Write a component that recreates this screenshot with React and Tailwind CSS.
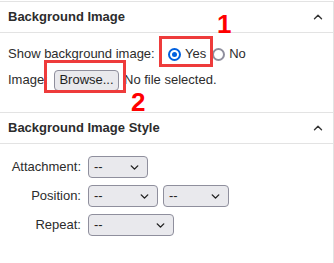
import { ChevronUp, ChevronDown } from 'lucide-react'

function Select({ width }) {
  return (
    <div
      className={`flex h-[22px] items-center justify-between rounded-[4px] border border-[#8f8f9d] bg-[#e9e9ed] pl-[5px] pr-[6px] text-[13px] text-[#1f1f1f] ${width}`}
    >
      <span>--</span>
      <ChevronDown size={13} strokeWidth={2.6} className="text-[#1f1f1f]" />
    </div>
  )
}

function Header({ title }) {
  return (
    <div className="flex h-[31px] items-center justify-between border-b border-[#e3e3e3] pl-2 pr-[8px]">
      <span className="text-[13px] font-bold text-[#2c2c2c]">{title}</span>
      <ChevronUp size={14} strokeWidth={2.4} className="text-[#333]" />
    </div>
  )
}

function Row({ label, children }) {
  return (
    <div className="flex items-center gap-[7px]">
      <span className="w-[81px] text-right">{label}</span>
      {children}
    </div>
  )
}

export default function App() {
  return (
    <div className="relative h-[263px] w-[334px] overflow-hidden bg-white pt-px font-['Liberation_Sans',sans-serif] text-[13px] text-[#2c2c2c]">
      <div className="h-full border-r border-t border-[#e3e3e3]">
        <Header title="Background Image" />

        <div className="flex h-[80px] flex-col border-b border-[#e3e3e3] px-2 pt-[10px]">
          <div className="flex h-[22px] items-center">
            <span className="w-[153px]">Show background image:</span>
            <span className="ml-[7px] flex h-[13px] w-[13px] items-center justify-center rounded-full border-2 border-[#0060df]">
              <span className="h-[5px] w-[5px] rounded-full bg-[#0060df]" />
            </span>
            <span className="ml-[4px]">Yes</span>
            <span className="ml-[6px] h-[13px] w-[13px] rounded-full border-2 border-[#8f8f9d]" />
            <span className="ml-[4px]">No</span>
          </div>
          <div className="mt-[4px] flex h-[22px] items-center">
            <span className="w-[46px]">Image:</span>
            <span className="flex h-[21px] w-[65px] items-center justify-center rounded-[4px] border border-[#8f8f9d] bg-[#e9e9ed] text-[#1f1f1f]">
              Browse...
            </span>
            <span className="ml-[5px]">No file selected.</span>
          </div>
        </div>

        <Header title="Background Image Style" />

        <div className="flex flex-col gap-[7px] pt-[12px]">
          <Row label="Attachment:">
            <Select width="w-[60px]" />
          </Row>
          <Row label="Position:">
            <div className="flex gap-[5px]">
              <Select width="w-[70px]" />
              <Select width="w-[66px]" />
            </div>
          </Row>
          <Row label="Repeat:">
            <Select width="w-[86px]" />
          </Row>
        </div>
      </div>

      <div className="absolute left-[159px] top-[36px] h-[31px] w-[54px] border-[3px] border-[#ee3b3b]" />
      <div className="absolute left-[44px] top-[60px] h-[33px] w-[82px] border-[3px] border-[#ee3b3b]" />
      <span className="absolute left-[217px] top-[11px] font-['Liberation_Sans',sans-serif] text-[26px] font-bold leading-none text-[#ff0000]">
        1
      </span>
      <span className="absolute left-[131px] top-[89px] font-['Liberation_Sans',sans-serif] text-[26px] font-bold leading-none text-[#ff0000]">
        2
      </span>
    </div>
  )
}
